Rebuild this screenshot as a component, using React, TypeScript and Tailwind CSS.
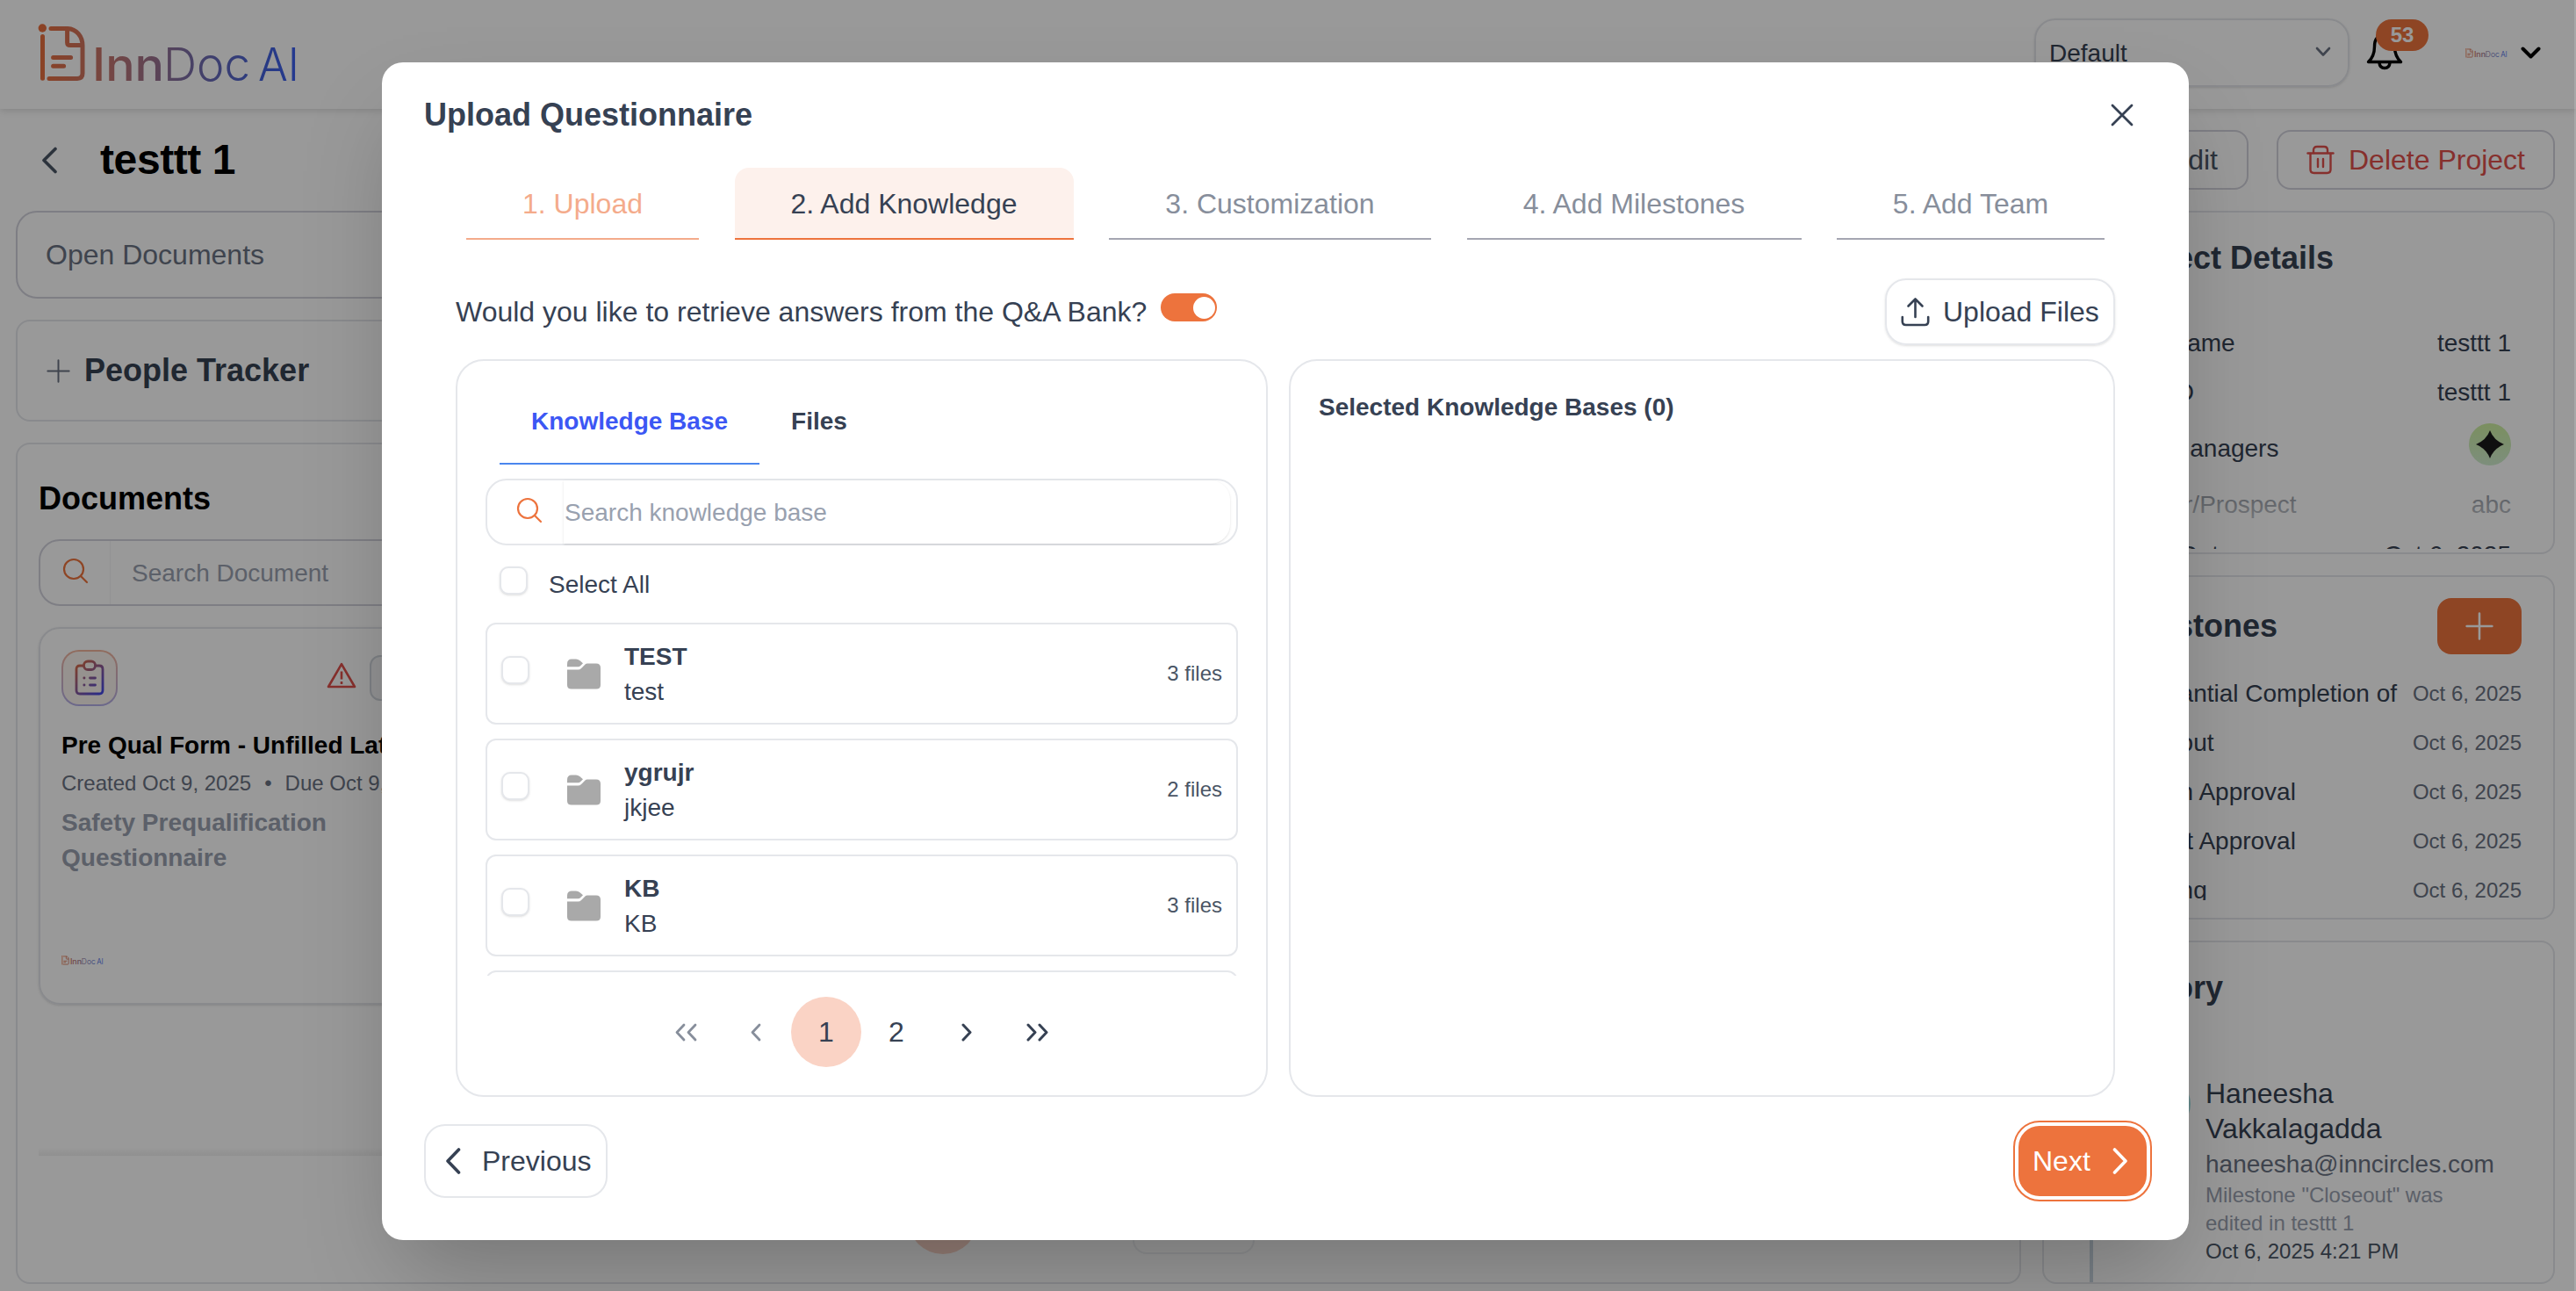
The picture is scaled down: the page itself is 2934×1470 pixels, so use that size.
import type { ReactNode } from 'react'

type IconProps = { className?: string }

function Logo({ id, className }: { id: string; className?: string }) {
  const fill = `url(#${id})`
  return (
    <svg viewBox="0 0 300 80" className={className} fill="none">
      <defs>
        <linearGradient id={id} gradientUnits="userSpaceOnUse" x1="0" y1="20" x2="296" y2="40">
          <stop offset="0" stopColor="#ea6f3c" />
          <stop offset="0.3" stopColor="#bf7674" />
          <stop offset="0.55" stopColor="#836fa0" />
          <stop offset="0.85" stopColor="#4562d8" />
          <stop offset="1" stopColor="#3d60f0" />
        </linearGradient>
      </defs>
      <g stroke={fill} strokeWidth="5" strokeLinecap="round" strokeLinejoin="round">
        <path d="M5.5 14.5V62.2" />
        <path d="M15 5.4H34C44 6 51 14 51 25V56.5Q51 62.4 45 62.4H13" />
        <path d="M33.6 7V21.5Q33.6 24.6 37 24.6H50" />
        <path d="M17.6 38.5H37.6M17.6 48.3H29.6" />
      </g>
      <circle cx="5.3" cy="5" r="4.7" fill={fill} />
      <g fill={fill} fontFamily="Inter, sans-serif" fontSize="52">
        <text x="62" y="64.7" fontWeight="500" textLength="82" lengthAdjust="spacingAndGlyphs">Inn</text>
        <text x="143" y="64.7" fontWeight="300" textLength="99" lengthAdjust="spacingAndGlyphs">Doc</text>
        <text x="251" y="64.7" fontWeight="300" textLength="47" lengthAdjust="spacingAndGlyphs">AI</text>
      </g>
    </svg>
  )
}

function Chevron({ d, w, h, stroke, className }: { d: string; w: number; h: number; stroke: number; className?: string }) {
  return (
    <svg width={w} height={h} viewBox={`0 0 ${w} ${h}`} className={className} fill="none" stroke="currentColor" strokeWidth={stroke} strokeLinecap="round" strokeLinejoin="round">
      <path d={d} />
    </svg>
  )
}

function SearchIcon({ className }: IconProps) {
  return (
    <svg width="30" height="30" viewBox="0 0 30 30" className={className} fill="none" stroke="#ed733d" strokeWidth="2.2" strokeLinecap="round">
      <circle cx="13" cy="13" r="11" />
      <path d="M21 21L28 28" />
    </svg>
  )
}

function BellIcon() {
  return (
    <svg width="42" height="44" viewBox="0 0 42 44" fill="none" stroke="#000" strokeWidth="3.4" strokeLinejoin="round">
      <path d="M2.5 34.5Q9.5 28 9.5 17Q9.5 4 21 4Q32.5 4 32.5 17Q32.5 28 39.5 34.5Z" />
      <path d="M15 35.5Q15.5 41.5 21 41.5Q26.5 41.5 27 35.5" />
    </svg>
  )
}

function TrashIcon() {
  return (
    <svg width="32" height="34" viewBox="0 0 32 34" fill="none" stroke="currentColor" strokeWidth="2.4" strokeLinecap="round" strokeLinejoin="round">
      <path d="M1.5 9.5H30.5" />
      <path d="M8 9V6Q8 2 12 2H20Q24 2 24 6V9" />
      <path d="M4.5 10V28Q4.5 32 8.5 32H23.5Q27.5 32 27.5 28V10" />
      <path d="M13 16V25M19 16V25" />
    </svg>
  )
}

function ClipboardIcon() {
  return (
    <svg width="34" height="42" viewBox="0 0 34 42" fill="none" stroke="url(#clip)" strokeWidth="2.8" strokeLinecap="round">
      <defs>
        <linearGradient id="clip" gradientUnits="userSpaceOnUse" x1="0" y1="4" x2="34" y2="40">
          <stop offset="0" stopColor="#e06c3c" />
          <stop offset="0.5" stopColor="#8a5a98" />
          <stop offset="1" stopColor="#3b45f0" />
        </linearGradient>
      </defs>
      <path d="M10 7H6Q2 7 2 11V35Q2 39 6 39H28Q32 39 32 35V11Q32 7 28 7H24" />
      <rect x="10.5" y="2" width="13" height="9.5" rx="4.5" />
      <path d="M17.5 21H23.5M17.5 29H23.5M10.8 21H11M10.8 29H11" />
    </svg>
  )
}

function WarningIcon() {
  return (
    <svg width="34" height="30" viewBox="0 0 34 30" fill="none" stroke="#e0504c" strokeWidth="2.6" strokeLinejoin="round">
      <path d="M17 2.2L32 28H2Z" />
      <path d="M17 10.5V19.5M17 22V25" />
    </svg>
  )
}

function FolderIcon() {
  return (
    <svg width="38" height="35" viewBox="0 0 38 35" fill="#a9a9a9">
      <path d="M0 9.3V6Q0 0.5 5 0.5H10Q12.5 0.5 14.5 2.2L18 5.3L15 8.3Q14 9.3 12.5 9.3Z" />
      <path d="M0 12.5H12.5Q14.5 12.5 16 11L20.5 6.5Q21.5 5.5 23 5.5H33Q38 5.5 38 10.5V30Q38 34.5 33 34.5H5Q0 34.5 0 30Z" />
    </svg>
  )
}

function UploadIcon() {
  return (
    <svg width="33" height="34" viewBox="0 0 33 34" fill="none" stroke="currentColor" strokeWidth="2.6" strokeLinecap="round" strokeLinejoin="round">
      <path d="M16.5 23V2.5M8.5 10.5L16.5 2.5L24.5 10.5" />
      <path d="M1.8 23V28Q1.8 32 5.8 32H27.2Q31.2 32 31.2 28V23" />
    </svg>
  )
}

function PlusIcon({ size, stroke }: { size: number; stroke: number }) {
  return (
    <svg width={size} height={size} viewBox="0 0 30 30" fill="none" stroke="currentColor" strokeWidth={stroke} strokeLinecap="round">
      <path d="M15 1.5V28.5M1.5 15H28.5" />
    </svg>
  )
}

function Header() {
  return (
    <header className="flex h-[124px] shrink-0 items-start justify-between bg-white pl-[43px] pr-10 shadow-[0_2px_8px_rgba(0,0,0,0.14)]">
      <Logo id="logo-main" className="mt-[27px] h-20 w-[300px]" />
      <div className="flex items-start">
        <div className="mt-[21px] flex h-[78px] w-[359px] items-center justify-between rounded-3xl border-2 border-gray-200 pl-[15px] pr-[19px] pt-[2px] text-[28px] text-gray-700 shadow-sm">
          Default
          <Chevron d="M2 2L9 9.5L16 2" w={18} h={12} stroke={2.6} className="-mt-1 text-gray-500" />
        </div>
        <div className="relative ml-[19px] mt-[36px]">
          <BellIcon />
          <span className="absolute -top-[14px] left-[11px] flex h-9 w-[60px] items-center justify-center rounded-full bg-[#ed733d] text-2xl font-bold text-white">53</span>
        </div>
        <Logo id="logo-top" className="ml-[71px] mt-[55px] h-[13px] w-12" />
        <Chevron d="M2.5 2.5L11.5 11.5L20.5 2.5" w={23} h={14} stroke={4} className="ml-[15px] mt-[53px]" />
      </div>
    </header>
  )
}

function DocumentCard() {
  return (
    <div className="mt-6 flex h-[430px] w-[700px] flex-col rounded-3xl border-2 border-gray-200 p-6 shadow-sm">
      <div className="flex items-center">
        <div className="rounded-[20px] bg-gradient-to-b from-[#f2b49b] to-[#b3aee8] p-[2px]">
          <div className="flex size-[60px] items-center justify-center rounded-[18px] bg-[#fbf3ef]">
            <ClipboardIcon />
          </div>
        </div>
        <div className="ml-[238px] mt-[-6px]">
          <WarningIcon />
        </div>
        <div className="ml-[15px] h-[52px] w-[180px] rounded-xl border-2 border-gray-300 bg-gray-100" />
      </div>
      <p className="mt-[25px] whitespace-nowrap text-[28px] leading-10 font-bold text-black">Pre Qual Form - Unfilled Latest</p>
      <p className="mt-[3px] flex whitespace-nowrap text-2xl leading-10 text-gray-500">
        <span>Created Oct 9, 2025</span>
        <span className="mx-[15px]">•</span>
        <span>Due Oct 9, 2025</span>
      </p>
      <p className="mt-[5px] w-[340px] text-[28px] leading-10 font-bold text-gray-400">Safety Prequalification Questionnaire</p>
      <Logo id="logo-card" className="mt-[91px] h-[13px] w-12" />
    </div>
  )
}

function MainColumn() {
  return (
    <div className="flex w-[2284px] flex-col gap-6">
      <div className="flex h-[100px] items-center rounded-3xl border-2 border-[#d3d3dd] px-8 text-[32px] text-gray-500">Open Documents</div>
      <div className="flex h-[116px] items-center gap-4 rounded-2xl border-2 border-gray-200 px-[33px] text-4xl font-bold text-gray-700">
        <span className="text-gray-500">
          <PlusIcon size={27} stroke={2.2} />
        </span>
        People Tracker
      </div>
      <div className="flex h-[958px] flex-col rounded-2xl border-2 border-gray-200 p-6">
        <h2 className="mb-2 flex h-[76px] shrink-0 items-center text-4xl font-bold text-black">Documents</h2>
        <div className="flex h-[76px] w-[900px] shrink-0 items-center rounded-3xl border-2 border-[#d3d3dd] text-[28px] text-gray-400">
          <SearchIcon className="-mt-1 ml-[25px]" />
          <span className="ml-6 flex h-full items-center border-l border-gray-100 pl-6 pt-[2px]">Search Document</span>
        </div>
        <DocumentCard />
        <div className="mt-[163px] h-[9px] shrink-0 bg-gradient-to-b from-transparent to-black/6" />
        {/* pagination footer */}
        <div className="ml-[990px] mt-8 flex items-end gap-[176px]">
          <div className="size-20 rounded-full bg-[#f9d3c5]" />
          <div className="h-20 w-[139px] rounded-2xl border-2 border-gray-200/60" />
        </div>
      </div>
    </div>
  )
}

function DetailRow({ label, value, className }: { label: string; value: ReactNode; className?: string }) {
  return (
    <div className={`flex shrink-0 items-end justify-between leading-10 ${className ?? ''}`}>
      <span>{label}</span>
      <span>{value}</span>
    </div>
  )
}

const milestones = ['Substantial Completion of', 'Closeout', 'Design Approval', 'Project Approval', 'Drawing']

function SideColumn() {
  return (
    <div className="flex w-[584px] flex-col gap-6 text-gray-700">
      <section className="h-[391px] rounded-2xl border-2 border-gray-200">
        <h2 className="mt-6 mb-12 pl-20 text-4xl leading-[56px] font-bold">Project Details</h2>
        <div className="relative flex h-[255px] flex-col overflow-hidden pl-12 pr-12 pt-px text-[28px]">
          <DetailRow label="Project Name" value="testtt 1" />
          <DetailRow label="Project ID" value="testtt 1" className="mt-4" />
          <DetailRow
            label="Project Managers"
            className="mt-4"
            value={
              <span className="-mt-px mb-px flex size-12 items-center justify-center rounded-full bg-gradient-to-b from-[#cdee9f] to-[#d0edcf]">
                <svg width="32" height="32" viewBox="0 0 32 32" fill="#1a1a1a">
                  <path d="M16 0Q20 11 32 16Q20 21 16 32Q12 21 0 16Q12 11 16 0Z" />
                </svg>
              </span>
            }
          />
          <DetailRow label="Customer/Prospect" value="abc" className="mt-6" />
          <DetailRow label="Created Date" value="Oct 6, 2025" className="mt-[17px]" />
          <div className="absolute inset-x-0 top-[180px] h-[56px] bg-gradient-to-b from-white/40 to-white/80" />
        </div>
      </section>

      <section className="h-[392px] rounded-2xl border-2 border-gray-200">
        <div className="mt-6 flex h-16 items-center justify-between pl-20 pr-9">
          <h2 className="text-4xl font-bold">Milestones</h2>
          <button className="flex h-16 w-24 items-center justify-center rounded-2xl bg-[#ed733d] text-white">
            <PlusIcon size={32} stroke={2.4} />
          </button>
        </div>
        <div className="mt-6 flex h-[256px] flex-col gap-4 overflow-hidden pl-[83px] pr-9 pt-px">
          {milestones.map((name) => (
            <div key={name} className="flex h-10 shrink-0 items-center justify-between whitespace-nowrap">
              <span className="text-[28px] leading-10">{name}</span>
              <span className="text-2xl text-gray-500">Oct 6, 2025</span>
            </div>
          ))}
        </div>
      </section>

      <section className="flex h-[391px] flex-col rounded-2xl border-2 border-gray-200">
        <h2 className="mt-6 pl-20 text-4xl leading-[56px] font-bold">History</h2>
        <div className="mt-[72px] flex flex-1 items-stretch pl-[52px]">
          <div className="w-1 bg-slate-300" />
          <div className="ml-[47px] size-16 rounded-full bg-[#a6e4e6]" />
          <div className="ml-[17px]">
            <p className="w-[200px] text-[32px] leading-10">Haneesha Vakkalagadda</p>
            <p className="pt-px text-[28px] leading-10 text-gray-500">haneesha@inncircles.com</p>
            <p className="-mt-px w-[300px] text-2xl leading-8 text-gray-400">Milestone "Closeout" was edited in testtt 1</p>
            <p className="text-2xl leading-8 text-gray-600">Oct 6, 2025 4:21 PM</p>
          </div>
        </div>
      </section>
    </div>
  )
}

function Page() {
  return (
    <div className="flex h-full flex-col bg-white">
      <Header />
      <div className="mt-6 flex h-[68px] shrink-0 items-center justify-between pl-[47px] pr-6">
        <div className="flex items-center">
          <Chevron d="M16 2.5L3 15.5L16 28.5" w={19} h={31} stroke={3.6} className="text-gray-600" />
          <h1 className="ml-12 text-5xl font-bold tracking-[-0.4px] text-black">testtt 1</h1>
        </div>
        <div className="flex gap-8 text-[32px]">
          <div className="flex h-[68px] w-[180px] items-center justify-end rounded-2xl border-2 border-[#d3d3dd] pr-[33px] text-gray-600">Edit</div>
          <div className="flex h-[68px] w-[317px] items-center gap-4 rounded-2xl border-2 border-[#d3d3dd] pl-8 text-[#e0504c]">
            <TrashIcon />
            <span className="whitespace-nowrap">Delete Project</span>
          </div>
        </div>
      </div>
      <div className="mt-6 flex gap-6 pl-[18px]">
        <MainColumn />
        <SideColumn />
      </div>
    </div>
  )
}

function Checkbox({ className }: IconProps) {
  return <div className={`size-8 shrink-0 rounded-[10px] border-2 border-gray-200 bg-white shadow-sm ${className ?? ''}`} />
}

const steps = [
  { label: '1. Upload', cls: 'w-[265px] border-[#f4ab8b] text-[#f4ab8b]' },
  { label: '2. Add Knowledge', cls: 'w-[386px] rounded-t-2xl border-[#ed733d] bg-[#fdf1ec] text-gray-700' },
  { label: '3. Customization', cls: 'w-[367px] border-[#a5a6b2] text-[#878e9b]' },
  { label: '4. Add Milestones', cls: 'w-[381px] border-[#a5a6b2] text-[#878e9b]' },
  { label: '5. Add Team', cls: 'w-[305px] border-[#a5a6b2] text-[#878e9b]' },
]

const knowledgeBases = [
  { name: 'TEST', desc: 'test', files: 3 },
  { name: 'ygrujr', desc: 'jkjee', files: 2 },
  { name: 'KB', desc: 'KB', files: 3 },
  { name: '', desc: '', files: 0 },
]

function KnowledgePanel() {
  return (
    <div className="flex h-[840px] w-[925px] flex-col rounded-[32px] border-2 border-gray-200 px-8 pt-[18px]">
      <div className="ml-4 flex text-[28px] font-bold">
        <div className="flex h-[100px] items-center border-b-2 border-[#4a86ee] px-9 pt-[3px] text-[#3c57f4]">Knowledge Base</div>
        <div className="flex h-[100px] items-center border-b-2 border-transparent px-9 pt-[3px] text-gray-700">Files</div>
      </div>

      <div className="mt-4 flex h-[76px] shrink-0 items-center rounded-3xl border-2 border-gray-200 text-[28px] text-gray-400">
        <SearchIcon className="-mt-1 ml-[33px] shrink-0" />
        <span className="ml-6 mr-[7px] flex h-[72px] flex-1 items-center rounded-r-[22px] pl-px pt-[2px] shadow-sm">Search knowledge base</span>
      </div>

      <div className="flex h-[88px] shrink-0 gap-6 pl-4 pt-6 text-[28px] leading-10 text-gray-700">
        <Checkbox />
        <span className="pt-px">Select All</span>
      </div>

      <div className="flex h-[402px] shrink-0 flex-col gap-4 overflow-hidden">
        {knowledgeBases.map((kb, i) => (
          <div key={i} className="flex h-[116px] shrink-0 items-center rounded-xl border-2 border-gray-200 px-4 text-gray-700">
            {kb.name && (
              <>
                <Checkbox className="mb-2" />
                <div className="ml-[43px]">
                  <FolderIcon />
                </div>
                <div className="ml-[27px] flex-1 pt-[2px] text-[28px] leading-10">
                  <p className="font-bold">{kb.name}</p>
                  <p>{kb.desc}</p>
                </div>
                <span className="text-2xl text-gray-600">{kb.files} files</span>
              </>
            )}
          </div>
        ))}
      </div>

      <div className="mr-px mt-6 flex justify-center text-[32px] text-gray-700">
        <button className="flex size-20 items-center justify-center text-[#878e9b]">
          <Chevron d="M10 2L2 10.5L10 19M23 2L15 10.5L23 19" w={25} h={21} stroke={2.8} />
        </button>
        <button className="flex size-20 items-center justify-center text-[#878e9b]">
          <Chevron d="M10 2L2 10.5L10 19" w={12} h={21} stroke={2.8} />
        </button>
        <button className="flex size-20 items-center justify-center rounded-full bg-[#fad3c5]">1</button>
        <button className="flex size-20 items-center justify-center">2</button>
        <button className="flex size-20 items-center justify-center">
          <Chevron d="M2 2L10 10.5L2 19" w={12} h={21} stroke={3} />
        </button>
        <button className="flex size-20 items-center justify-center">
          <Chevron d="M2 2L10 10.5L2 19M15 2L23 10.5L15 19" w={25} h={21} stroke={3} />
        </button>
      </div>
    </div>
  )
}

function UploadModal() {
  return (
    <div className="flex h-[1341px] w-[2058px] flex-col rounded-3xl bg-white px-12 pt-6 text-gray-700 shadow-[0_50px_100px_-24px_rgba(0,0,0,0.25)]">
      <div className="flex h-[70px] items-center justify-between pr-[15px] pt-px">
        <h2 className="pt-px text-4xl font-bold">Upload Questionnaire</h2>
        <Chevron d="M2 2L24 24M24 2L2 24" w={26} h={26} stroke={2.8} />
      </div>

      <div className="mt-[26px] flex justify-between px-12 text-[32px]">
        {steps.map((s) => (
          <div key={s.label} className={`flex h-[82px] items-center justify-center border-b-2 pt-px ${s.cls}`}>
            {s.label}
          </div>
        ))}
      </div>

      <div className="mt-11 flex h-[76px] items-center px-9 text-[32px]">
        <span>Would you like to retrieve answers from the Q&amp;A Bank?</span>
        <div className="mb-[10px] ml-4 flex h-8 w-16 items-center justify-end rounded-full bg-[#ed733d] pr-[2px]">
          <div className="size-[25px] rounded-full bg-white" />
        </div>
        <button className="ml-auto flex h-[76px] w-[262px] items-center gap-[15px] rounded-3xl border-2 border-gray-200 pl-4 whitespace-nowrap shadow-sm">
          <UploadIcon />
          Upload Files
        </button>
      </div>

      <div className="mt-4 flex justify-between px-9">
        <KnowledgePanel />
        <div className="h-[840px] w-[941px] rounded-[32px] border-2 border-gray-200 px-8 pt-[33px]">
          <h3 className="text-[28px] leading-10 font-bold">Selected Knowledge Bases (0)</h3>
        </div>
      </div>

      <div className="mt-[31px] flex h-[84px] items-center justify-between text-[32px]">
        <button className="flex h-[84px] w-[209px] items-center gap-6 rounded-3xl border-2 border-gray-200 pl-[22px]">
          <Chevron d="M15.5 2L3 15L15.5 28" w={18} h={30} stroke={3.6} />
          Previous
        </button>
        <button className="flex h-20 w-[146px] items-center justify-between rounded-3xl bg-[#ed733d] pl-4 pr-[21px] text-white outline-2 outline-offset-4 outline-[#ed733d]">
          Next
          <Chevron d="M2.5 2L15 15L2.5 28" w={18} h={30} stroke={3.6} />
        </button>
      </div>
    </div>
  )
}

export default function App() {
  return (
    <div className="relative h-[1470px] w-[2934px] overflow-hidden bg-white font-['Liberation_Sans',Arial,sans-serif]">
      <Page />
      <div className="absolute inset-0 border-r-2 border-white/15 bg-black/40 pt-[71px] pl-[435px]">
        <UploadModal />
      </div>
    </div>
  )
}
